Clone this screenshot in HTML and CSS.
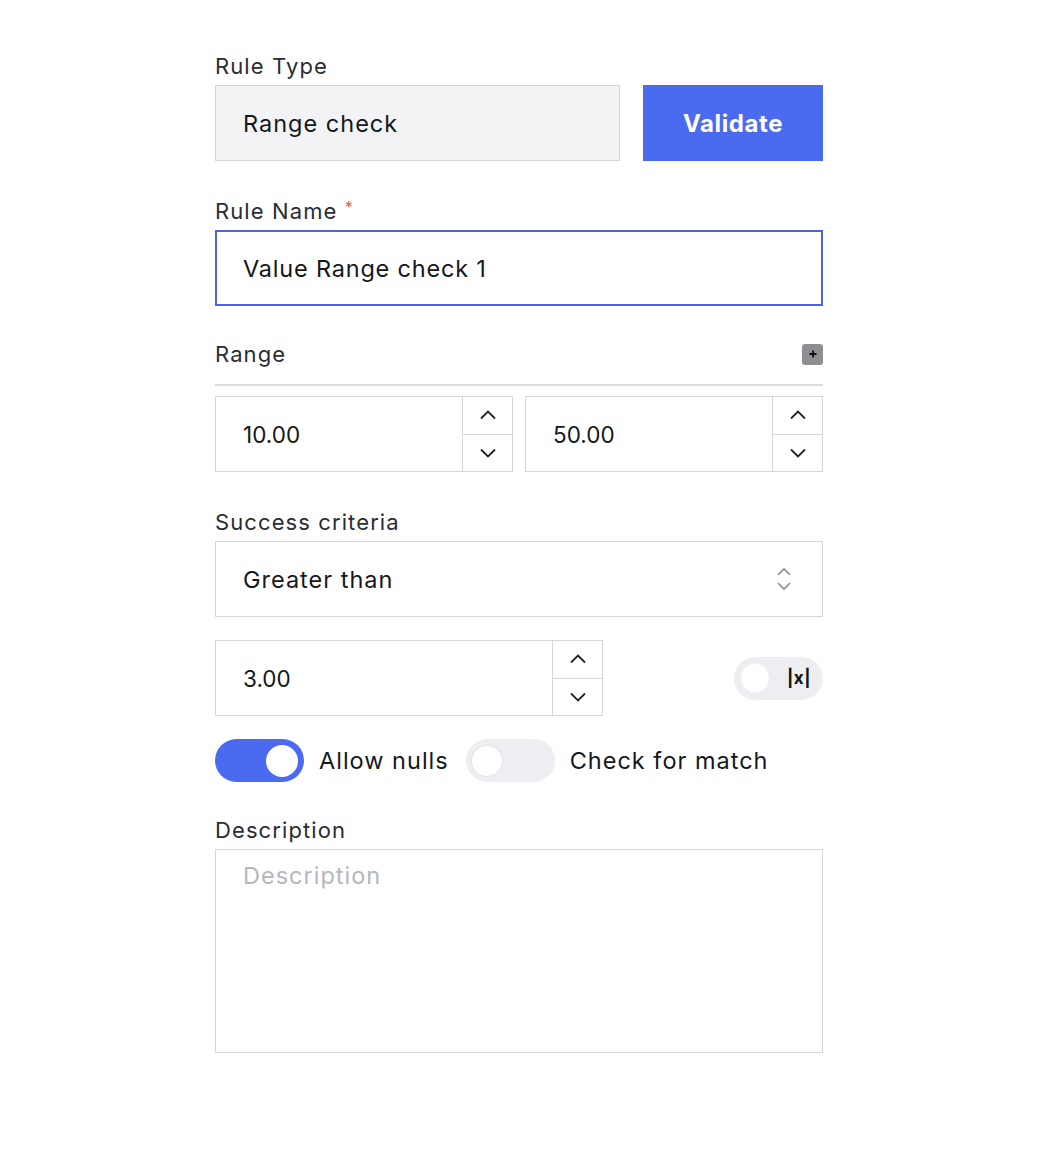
FILE: index.html
```html
<!DOCTYPE html>
<html>
<head>
<meta charset="utf-8">
<link rel="stylesheet" href="styles.css">
</head>
<body>
<div class="form">
  <div class="field field-first">
    <div class="label">Rule Type</div>
    <div class="row-type">
      <div class="box box-disabled txt">Range check</div>
      <button class="btn-validate">Validate</button>
    </div>
  </div>

  <div class="field">
    <div class="label">Rule Name <span class="req">*</span></div>
    <div class="box box-focus txt">Value Range check 1</div>
  </div>

  <div class="field field-range">
    <div class="range-head">
      <div class="label label-flat">Range</div>
      <span class="plus-btn">
        <svg width="10" height="10" viewBox="0 0 10 10"><path d="M5 1.5v7M1.5 5h7" stroke="#111" stroke-width="1.8"/></svg>
      </span>
    </div>
    <div class="range-row">
      <div class="num">
        <div class="num-val">10.00</div>
        <div class="spin">
          <span class="spin-btn"><svg width="18" height="10" viewBox="0 0 18 10"><path d="M2 8.5l7-7 7 7" fill="none" stroke="#222" stroke-width="1.8"/></svg></span>
          <span class="spin-btn"><svg width="18" height="10" viewBox="0 0 18 10"><path d="M2 1.5l7 7 7-7" fill="none" stroke="#222" stroke-width="1.8"/></svg></span>
        </div>
      </div>
      <div class="num">
        <div class="num-val">50.00</div>
        <div class="spin">
          <span class="spin-btn"><svg width="18" height="10" viewBox="0 0 18 10"><path d="M2 8.5l7-7 7 7" fill="none" stroke="#222" stroke-width="1.8"/></svg></span>
          <span class="spin-btn"><svg width="18" height="10" viewBox="0 0 18 10"><path d="M2 1.5l7 7 7-7" fill="none" stroke="#222" stroke-width="1.8"/></svg></span>
        </div>
      </div>
    </div>
  </div>

  <div class="field">
    <div class="label">Success criteria</div>
    <div class="box box-select txt">
      <span>Greater than</span>
      <svg class="sel-arrows" width="16" height="26" viewBox="0 0 16 26"><path d="M2 9l6-6 6 6M2 17l6 6 6-6" fill="none" stroke="#888c93" stroke-width="1.6"/></svg>
    </div>
    <div class="crit-row">
      <div class="num num-crit">
        <div class="num-val">3.00</div>
        <div class="spin">
          <span class="spin-btn"><svg width="18" height="10" viewBox="0 0 18 10"><path d="M2 8.5l7-7 7 7" fill="none" stroke="#222" stroke-width="1.8"/></svg></span>
          <span class="spin-btn"><svg width="18" height="10" viewBox="0 0 18 10"><path d="M2 1.5l7 7 7-7" fill="none" stroke="#222" stroke-width="1.8"/></svg></span>
        </div>
      </div>
      <div class="abs-toggle">
        <span class="abs-knob"></span>
        <span class="abs-text">|x|</span>
      </div>
    </div>
  </div>

  <div class="toggles">
    <div class="tog-item">
      <span class="toggle toggle-on"><span class="knob"></span></span>
      <span class="tog-label txt">Allow nulls</span>
    </div>
    <div class="tog-item">
      <span class="toggle toggle-off"><span class="knob"></span></span>
      <span class="tog-label txt">Check for match</span>
    </div>
  </div>

  <div class="field field-desc">
    <div class="label">Description</div>
    <div class="textarea"><span class="placeholder txt">Description</span></div>
  </div>
</div>
</body>
</html>
```

FILE: styles.css
```css
* { box-sizing: border-box; }
body {
  margin: 0;
  background: #ffffff;
  font-family: "Inter", "Noto Sans", sans-serif;
  color: #1c1f24;
}
.form {
  width: 608px;
  margin-left: 215px;
  padding-top: 51px;
  display: flex;
  flex-direction: column;
}
.field { display: flex; flex-direction: column; margin-bottom: 33px; }
.field-first { margin-bottom: 35px; }
.field-range { margin-bottom: 35px; }
.label {
  font-size: 22px;
  line-height: 30px;
  height: 30px;
  margin-bottom: 4px;
  color: #2a2d33;
  letter-spacing: 1.1px;
}
.label-flat { margin-bottom: 0; }
.req { color: #e0584f; font-size: 16px; position: relative; top: -6px; }
.txt { letter-spacing: 1px; }
.row-type { display: flex; gap: 23px; }
.box {
  height: 76px;
  border: 1.5px solid #d5d7db;
  display: flex;
  align-items: center;
  padding-left: 27px;
  font-size: 23.5px;
  color: #15171a;
  background: #fff;
}
.box-disabled { flex: 0 0 405px; background: #f2f3f5; border-color: #d3d5d9; }
.box-focus { border: 2px solid #4b63e6; padding-left: 26px; letter-spacing: 0.8px; }
.btn-validate {
  flex: 1;
  height: 76px;
  border: none;
  background: #4a6bf0;
  color: #fff;
  font-family: "Inter", sans-serif;
  font-weight: 700;
  font-size: 24px;
  letter-spacing: 0.6px;
  padding: 0;
}
.range-head {
  display: flex;
  justify-content: space-between;
  align-items: center;
  height: 30px;
  box-sizing: content-box;
  padding-bottom: 15px;
  border-bottom: 2px solid #dcdee2;
}
.plus-btn {
  width: 21px; height: 21px;
  background: #8d8f93;
  border-radius: 3px;
  display: flex; align-items: center; justify-content: center;
}
.range-row { display: flex; gap: 12px; margin-top: 10px; }
.num {
  flex: 1;
  height: 76px;
  border: 1.5px solid #d5d7db;
  display: flex;
}
.num-val {
  flex: 1;
  display: flex;
  align-items: center;
  padding-left: 27px;
  font-size: 22.5px;
  color: #15171a;
}
.spin {
  width: 50px;
  border-left: 1.5px solid #d5d7db;
  display: flex;
  flex-direction: column;
}
.spin-btn {
  flex: 1;
  display: flex;
  align-items: center;
  justify-content: center;
}
.spin-btn + .spin-btn { border-top: 1.5px solid #d5d7db; }
.box-select { justify-content: space-between; padding-right: 30px; }
.crit-row {
  display: flex;
  justify-content: space-between;
  align-items: center;
  margin-top: 23px;
}
.num-crit { flex: 0 0 388px; }
.abs-toggle {
  width: 89px;
  height: 43px;
  border-radius: 22px;
  background: #eceef1;
  display: flex;
  align-items: center;
  padding-left: 7px;
  gap: 18px;
}
.abs-knob {
  width: 28px; height: 28px; border-radius: 50%;
  background: #fff;
}
.abs-text { font-weight: 700; font-size: 17px; color: #111; letter-spacing: 0.5px; }
.toggles {
  display: flex;
  align-items: center;
  gap: 17px;
  margin-top: -10px;
  margin-bottom: 33px;
}
.tog-item { display: flex; align-items: center; gap: 15px; }
.toggle {
  width: 89px; height: 43px; border-radius: 22px;
  display: flex; align-items: center;
  padding: 0 6px;
}
.toggle-on { background: #4a6bf0; justify-content: flex-end; }
.toggle-off { background: #eceef1; justify-content: flex-start; }
.knob { width: 32px; height: 32px; border-radius: 50%; background: #fff; }
.toggle-off .knob { width: 30px; height: 30px; box-shadow: 0 0 0 1px #e3e5e8; }
.tog-label { font-size: 23.5px; color: #15171a; }
.textarea {
  height: 204px;
  border: 1.5px solid #d5d7db;
  padding: 11px 27px;
}
.placeholder { font-size: 23.5px; color: #b3b7bf; }
```
